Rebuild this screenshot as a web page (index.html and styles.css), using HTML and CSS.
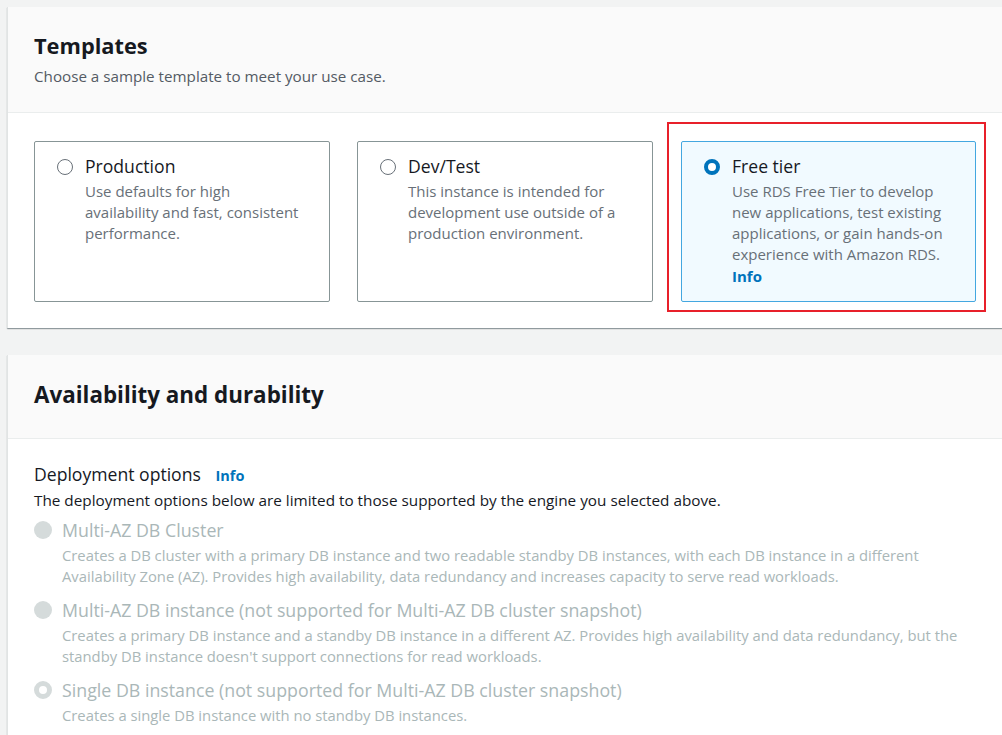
FILE: index.html
```html
<!DOCTYPE html>
<html>
<head>
<meta charset="utf-8">
<link rel="stylesheet" href="styles.css">
</head>
<body>
<div class="page">
  <section class="panel">
    <div class="panel-header tall">
      <h2 class="title">Templates</h2>
      <p class="subtitle">Choose a sample template to meet your use case.</p>
    </div>
    <div class="panel-body cards-body">
      <div class="cards">
        <div class="card">
          <span class="radio"></span>
          <div class="card-text">
            <div class="card-title">Production</div>
            <div class="card-desc">Use defaults for high availability and fast, consistent performance.</div>
          </div>
        </div>
        <div class="card">
          <span class="radio"></span>
          <div class="card-text">
            <div class="card-title">Dev/Test</div>
            <div class="card-desc">This instance is intended for development use outside of a production environment.</div>
          </div>
        </div>
        <div class="card selected">
          <span class="radio checked"></span>
          <div class="card-text">
            <div class="card-title">Free tier</div>
            <div class="card-desc">Use RDS Free Tier to develop new applications, test existing applications, or gain hands-on experience with Amazon RDS.</div>
            <a class="info">Info</a>
          </div>
          <span class="highlight"></span>
        </div>
      </div>
    </div>
  </section>

  <section class="panel second">
    <div class="panel-header short">
      <h2 class="title big">Availability and durability</h2>
    </div>
    <div class="panel-body options-body">
      <div class="field-label">Deployment options <a class="info small">Info</a></div>
      <div class="field-desc">The deployment options below are limited to those supported by the engine you selected above.</div>
      <div class="option">
        <span class="dradio"></span>
        <div>
          <div class="opt-title">Multi-AZ DB Cluster</div>
          <div class="opt-desc">Creates a DB cluster with a primary DB instance and two readable standby DB instances, with each DB instance in a different Availability Zone (AZ). Provides high availability, data redundancy and increases capacity to serve read workloads.</div>
        </div>
      </div>
      <div class="option">
        <span class="dradio"></span>
        <div>
          <div class="opt-title">Multi-AZ DB instance (not supported for Multi-AZ DB cluster snapshot)</div>
          <div class="opt-desc">Creates a primary DB instance and a standby DB instance in a different AZ. Provides high availability and data redundancy, but the standby DB instance doesn't support connections for read workloads.</div>
        </div>
      </div>
      <div class="option">
        <span class="dradio dchecked"></span>
        <div>
          <div class="opt-title">Single DB instance (not supported for Multi-AZ DB cluster snapshot)</div>
          <div class="opt-desc">Creates a single DB instance with no standby DB instances.</div>
        </div>
      </div>
    </div>
  </section>
</div>
</body>
</html>
```

FILE: styles.css
```css
* { box-sizing: border-box; }
html, body { margin: 0; padding: 0; }
body {
  background: #f2f3f3;
  font-family: "Open Sans", "Noto Sans", sans-serif;
  color: #16191f;
  overflow: hidden;
  width: 1002px;
  height: 735px;
}
.page {
  padding: 7px 0 0 7px;
}
.panel {
  width: 1020px;
  background: #fff;
  border-left: 1px solid #e1e4e4;
  box-shadow: 0 1px 1px 0 rgba(0, 28, 36, 0.3), 1px 1px 1px 0 rgba(0, 28, 36, 0.15);
}
.panel.second {
  margin-top: 27px;
}
.panel-header {
  background: #fafafa;
  border-bottom: 1px solid #eaeded;
  padding: 0 26px;
}
.panel-header.tall {
  height: 106px;
  padding-top: 25px;
}
.panel-header.short {
  height: 84px;
  display: flex;
  align-items: center;
  padding-bottom: 3px;
}
.title {
  margin: 0;
  font-size: 21.8px;
  line-height: 28px;
  font-weight: 700;
  color: #16191f;
}
.title.big {
  font-size: 22.4px;
}
.subtitle {
  margin: 5px 0 0;
  font-size: 15.2px;
  line-height: 22px;
  color: #545b64;
}
.cards-body {
  padding: 28px 26px 26px;
}
.cards {
  display: grid;
  grid-template-columns: 296px 296px 296px;
  column-gap: 27px;
}
.card {
  position: relative;
  display: flex;
  align-items: flex-start;
  gap: 12px;
  height: 161px;
  border: 1px solid #879596;
  border-radius: 2px;
  padding: 11px 14px 0 22px;
}
.card-text {
  max-width: 218px;
}
.card.selected {
  background: #f1faff;
  border-color: #44a7e0;
  margin-left: 1px;
}
.radio {
  flex: none;
  width: 16px;
  height: 16px;
  margin-top: 6px;
  border: 1.5px solid #687078;
  border-radius: 50%;
  background: #fff;
}
.radio.checked {
  border: 4.5px solid #0073bb;
}
.card-title {
  font-size: 17.6px;
  line-height: 26px;
  color: #16191f;
}
.card-desc {
  font-size: 15px;
  line-height: 21px;
  color: #687078;
  margin-top: 2px;
}
.info {
  color: #0073bb;
  font-weight: 700;
  font-size: 15px;
  line-height: 21px;
}
.info.small {
  font-size: 14.5px;
  margin-left: 10px;
}
.highlight {
  position: absolute;
  top: -20px;
  left: -15px;
  right: -11px;
  bottom: -11px;
  border: 2px solid #e8202a;
  pointer-events: none;
}
.options-body {
  padding: 23px 26px 20px;
}
.field-label {
  font-size: 17.6px;
  line-height: 24px;
  color: #16191f;
}
.field-desc {
  font-size: 15.3px;
  line-height: 24px;
  color: #16191f;
  margin-top: 2px;
}
.option {
  display: flex;
  align-items: flex-start;
  gap: 10px;
  margin-top: 5px;
}
.option + .option {
  margin-top: 10px;
}
.dradio {
  flex: none;
  width: 18px;
  height: 18px;
  margin-top: 4px;
  border-radius: 50%;
  background: #d5dbdb;
}
.dradio.dchecked {
  background: #fff;
  border: 5px solid #d5dbdb;
}
.opt-title {
  font-size: 17.8px;
  line-height: 26px;
  color: #aab7b8;
}
.opt-desc {
  font-size: 14.8px;
  line-height: 21px;
  color: #aab7b8;
  margin-top: 2px;
  max-width: 900px;
}
```
